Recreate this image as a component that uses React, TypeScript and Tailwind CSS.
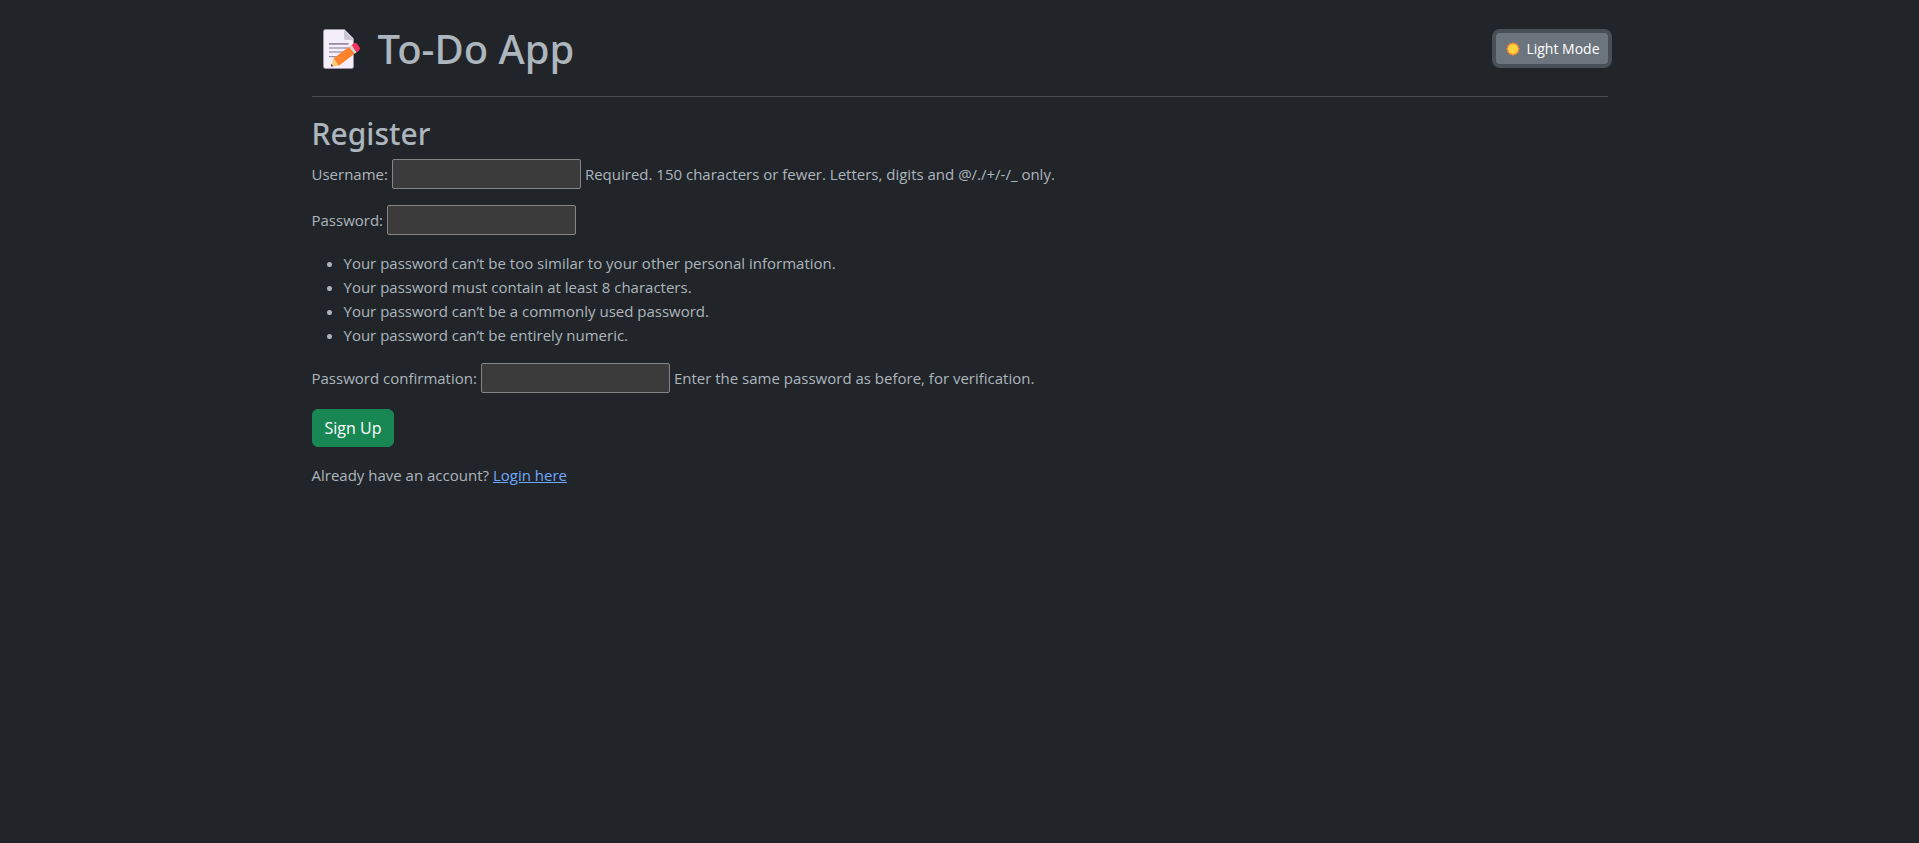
import { useState } from "react";

function MemoIcon() {
  return (
    <svg viewBox="0 0 40 40" className="h-10 w-10 shrink-0" aria-hidden="true">
      <path d="M3.5 0.5H22.5L31.5 9.5V37.5A2 2 0 0 1 29.5 39.5H3.5A2 2 0 0 1 1.5 37.5V2.5A2 2 0 0 1 3.5 0.5Z" fill="#f3eef8" stroke="#9c93a6" strokeWidth="1" />
      <path d="M22 1L31 10V11H24A2 2 0 0 1 22 9Z" fill="#cdc4d6" />
      <g fill="#998ea4">
        <rect x="7" y="14" width="19.5" height="1.8" />
        <rect x="7" y="18.4" width="19.5" height="1.2" />
        <rect x="7" y="22.4" width="16" height="1.2" />
        <rect x="7" y="27" width="10" height="1.2" />
      </g>
      <path d="M11.7 29.2L16.8 36.8L9.5 37.5L9 36.5Z" fill="#ffce7c" />
      <path d="M9.2 34.8L11.4 37.2L9 37.4Z" fill="#533566" />
      <path d="M11.7 29.2L27.2 17.8L32.6 24.8L16.8 36.8Z" fill="#ff822d" />
      <path d="M27.2 17.8L29.5 16.1L34.8 23.2L32.6 24.8Z" fill="#d3d3d3" />
      <path d="M29.5 16.1L31.8 14.4C32.9 13.6 34.3 13.8 35.1 14.8L37.4 17.9C38.2 19 38 20.6 36.9 21.5L34.8 23.2Z" fill="#f8315f" />
    </svg>
  );
}

function SunIcon() {
  return (
    <svg viewBox="0 0 14 14" className="h-3.5 w-3.5 shrink-0" aria-hidden="true">
      <path d="M7 0L8.4 1.2L10.3 0.9L11 2.7L12.8 3.6L12.6 5.5L14 7L12.6 8.5L12.8 10.4L11 11.3L10.3 13.1L8.4 12.8L7 14L5.6 12.8L3.7 13.1L3 11.3L1.2 10.4L1.4 8.5L0 7L1.4 5.5L1.2 3.6L3 2.7L3.7 0.9L5.6 1.2Z" fill="#f08a35" />
      <circle cx="7" cy="7" r="5" fill="#ffd23e" />
    </svg>
  );
}

type FieldProps = { id: string; label: string; type: string; help?: string };

function Field({ id, label, type, help }: FieldProps) {
  return (
    <div className="mb-4 flex items-center gap-1">
      <label htmlFor={id}>{label}</label>
      <input
        id={id}
        name={id}
        type={type}
        className="h-[30px] w-[189px] rounded-xs border border-[#858585] bg-[#3b3b3b] px-0.5 text-[#dee2e6]"
      />
      {help && <span>{help}</span>}
    </div>
  );
}

const passwordRules = [
  "Your password can’t be too similar to your other personal information.",
  "Your password must contain at least 8 characters.",
  "Your password can’t be a commonly used password.",
  "Your password can’t be entirely numeric.",
];

export default function App() {
  const [light, setLight] = useState(false);

  return (
    <div className="min-h-screen bg-[#212529] font-['Open_Sans','Noto_Sans',sans-serif] text-[15px] leading-6 text-[#adb5bd]">
      <div className="mx-auto max-w-[1320px] px-3 pt-6">
        <header className="flex h-[49px] items-center justify-between">
          <h1 className="flex items-center gap-4 pl-2.5 font-['Noto_Sans',sans-serif] text-[40px] leading-[50px] font-medium">
            <MemoIcon />
            To-Do App
          </h1>
          <button
            type="button"
            onClick={() => setLight(!light)}
            className="flex h-[31px] items-center gap-1.5 rounded-sm bg-[#6c757d] px-2 pl-2.5 text-sm text-white ring-4 ring-[#495057]"
          >
            <SunIcon />
            Light Mode
          </button>
        </header>
        <hr className="mt-[23px] mb-4 border-[#494d51]" />
        <main>
          <h2 className="mb-1.5 pt-0.5 font-['Noto_Sans',sans-serif] text-[30px] leading-[38px] font-medium">Register</h2>
          <form onSubmit={(e) => e.preventDefault()}>
            <Field id="username" label="Username:" type="text" help="Required. 150 characters or fewer. Letters, digits and @/./+/-/_ only." />
            <Field id="password1" label="Password:" type="password" />
            <ul className="mb-4 list-disc pl-8">
              {passwordRules.map((rule) => (
                <li key={rule}>{rule}</li>
              ))}
            </ul>
            <Field id="password2" label="Password confirmation:" type="password" help="Enter the same password as before, for verification." />
            <button type="submit" className="h-[38px] rounded-md border border-[#198754] bg-[#198754] px-3 text-base text-white">
              Sign Up
            </button>
          </form>
          <p className="mt-4">
            Already have an account?{" "}
            <a href="#login" className="text-[#6ea8fe] underline">
              Login here
            </a>
          </p>
        </main>
      </div>
    </div>
  );
}
